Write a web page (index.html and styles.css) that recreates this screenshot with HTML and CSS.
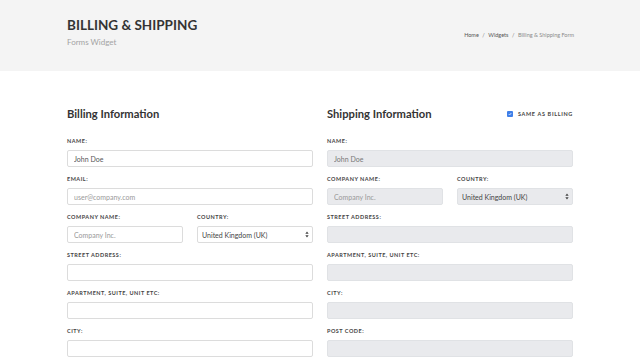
FILE: index.html
```html
<!DOCTYPE html>
<html lang="en">
<head>
<meta charset="utf-8">
<title>Billing & Shipping</title>
<link rel="stylesheet" href="styles.css">
</head>
<body>
<header class="page-header">
  <div class="header-inner">
    <div class="titles">
      <h1 class="page-title">BILLING &amp; SHIPPING</h1>
      <div class="page-sub">Forms Widget</div>
    </div>
    <nav class="crumbs">
      <a href="#">Home</a><span class="sep">/</span><a href="#">Widgets</a><span class="sep">/</span><span class="current">Billing &amp; Shipping Form</span>
    </nav>
  </div>
</header>
<main class="content">
  <section class="col">
    <div class="col-head">
      <h2 class="col-title">Billing Information</h2>
    </div>
    <div class="field">
      <label class="lbl">Name:</label>
      <input class="inp" type="text" value="John Doe">
    </div>
    <div class="field">
      <label class="lbl">Email:</label>
      <input class="inp" type="text" placeholder="user@company.com">
    </div>
    <div class="row">
      <div class="field">
        <label class="lbl">Company Name:</label>
        <input class="inp" type="text" placeholder="Company Inc.">
      </div>
      <div class="field">
        <label class="lbl">Country:</label>
        <div class="sel-wrap">
          <select class="inp sel"><option>United Kingdom (UK)</option></select>
          <svg class="sel-arrow" viewBox="0 0 6 10" width="4" height="7"><path d="M3 0.5 L5.5 4 H0.5 Z M3 9.5 L5.5 6 H0.5 Z" fill="#444"/></svg>
        </div>
      </div>
    </div>
    <div class="field">
      <label class="lbl">Street Address:</label>
      <input class="inp" type="text">
    </div>
    <div class="field">
      <label class="lbl">Apartment, Suite, Unit etc:</label>
      <input class="inp" type="text">
    </div>
    <div class="field">
      <label class="lbl">City:</label>
      <input class="inp" type="text">
    </div>
  </section>
  <section class="col col-ship">
    <div class="col-head">
      <h2 class="col-title">Shipping Information</h2>
      <label class="same"><span class="chk"><svg viewBox="0 0 8 8" width="4" height="4"><path d="M1.5 4.2 L3.3 6 L6.6 2" fill="none" stroke="#fff" stroke-width="1.4"/></svg></span>Same as billing</label>
    </div>
    <div class="field">
      <label class="lbl">Name:</label>
      <input class="inp dis" type="text" value="John Doe" disabled>
    </div>
    <div class="row">
      <div class="field">
        <label class="lbl">Company Name:</label>
        <input class="inp dis" type="text" placeholder="Company Inc." disabled>
      </div>
      <div class="field">
        <label class="lbl">Country:</label>
        <div class="sel-wrap">
          <select class="inp sel dis" disabled><option>United Kingdom (UK)</option></select>
          <svg class="sel-arrow" viewBox="0 0 6 10" width="4" height="7"><path d="M3 0.5 L5.5 4 H0.5 Z M3 9.5 L5.5 6 H0.5 Z" fill="#444"/></svg>
        </div>
      </div>
    </div>
    <div class="field">
      <label class="lbl">Street Address:</label>
      <input class="inp dis" type="text" disabled>
    </div>
    <div class="field">
      <label class="lbl">Apartment, Suite, Unit etc:</label>
      <input class="inp dis" type="text" disabled>
    </div>
    <div class="field">
      <label class="lbl">City:</label>
      <input class="inp dis" type="text" disabled>
    </div>
    <div class="field">
      <label class="lbl">Post Code:</label>
      <input class="inp dis" type="text" disabled>
    </div>
  </section>
</main>
</body>
</html>
```

FILE: styles.css
```css
* { box-sizing: border-box; }
html, body { margin: 0; padding: 0; }
body {
  width: 640px;
  height: 360px;
  overflow: hidden;
  background: #fff;
  font-family: Lato, "Open Sans", "Liberation Sans", sans-serif;
  color: #333;
}
.page-header {
  background: #f4f4f4;
  height: 71px;
}
.header-inner {
  display: flex;
  justify-content: space-between;
  align-items: flex-start;
  padding: 17px 66px 0 67px;
}
.page-title {
  margin: 0;
  font-family: Lato, sans-serif;
  font-weight: 700;
  font-size: 13.5px;
  line-height: 16px;
  letter-spacing: 0;
  color: #333;
}
.page-sub {
  margin-top: 4px;
  font-size: 8px;
  line-height: 10px;
  color: #a3a3a3;
}
.crumbs {
  margin-top: 14px;
  font-size: 5.5px;
  line-height: 8px;
  color: #666;
}
.crumbs a { color: #555; text-decoration: none; }
.crumbs .sep { margin: 0 3.5px; color: #777; }
.crumbs .current { color: #8a8a8a; }

.content {
  display: grid;
  grid-template-columns: 246px 246px;
  column-gap: 14px;
  padding: 36px 0 0 67px;
}
.col-head {
  display: flex;
  justify-content: space-between;
  align-items: center;
  height: 14px;
  margin-bottom: 16px;
}
.col-title {
  margin: 0;
  font-family: Lato, sans-serif;
  font-weight: 700;
  font-size: 11.2px;
  line-height: 14px;
  color: #333;
}
.same {
  display: flex;
  align-items: center;
  gap: 5px;
  margin-right: 0;
  font-size: 5.5px;
  font-weight: 700;
  letter-spacing: 0.65px;
  text-transform: uppercase;
  color: #444;
}
.chk {
  width: 6px;
  height: 6px;
  border-radius: 1px;
  background: #3f7fe8;
  display: flex;
  align-items: center;
  justify-content: center;
}
.chk svg { display: block; }
.field { margin-bottom: 8px; }
.row {
  display: grid;
  grid-template-columns: 1fr 1fr;
  column-gap: 14px;
}
.lbl {
  display: block;
  font-size: 5.5px;
  line-height: 8px;
  font-weight: 700;
  letter-spacing: 0.5px;
  text-transform: uppercase;
  color: #444;
  margin-bottom: 5px;
}
.inp {
  display: block;
  width: 100%;
  height: 17px;
  margin: 0;
  padding: 0 6px;
  border: 1px solid #dcdcdc;
  border-radius: 2px;
  background: #fff;
  font-family: Lato, sans-serif;
  font-size: 7px;
  color: #555;
  outline: none;
}
.inp::placeholder { color: #999; opacity: 1; }
.inp.dis {
  background: #e9eaed;
  border-color: #e0e2e5;
  color: #777;
}
.sel-wrap { position: relative; }
.sel {
  -webkit-appearance: none;
  appearance: none;
  padding-left: 4px;
  color: #444;
}
.sel.dis { color: #444; opacity: 1; }
.sel-arrow {
  position: absolute;
  right: 4px;
  top: 5px;
}
```
